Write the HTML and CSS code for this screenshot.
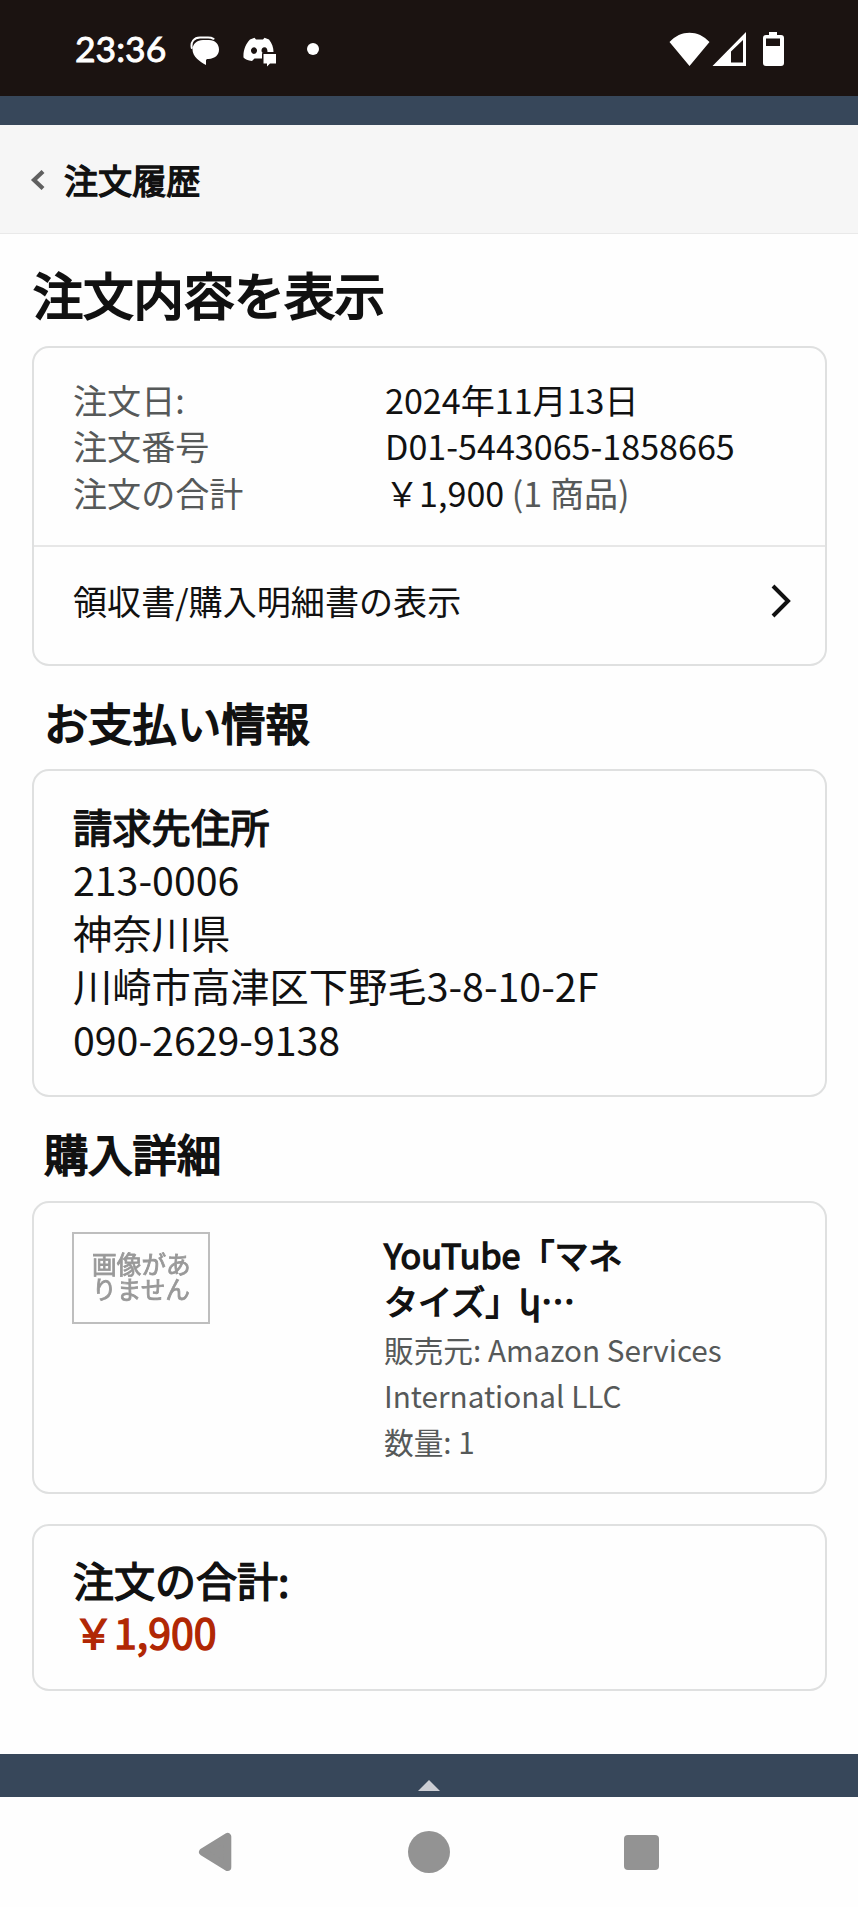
FILE: index.html
```html
<!DOCTYPE html>
<html lang="ja">
<head>
<meta charset="utf-8">
<title>注文内容を表示</title>
<link rel="stylesheet" href="styles.css">
</head>
<body>
<div class="status">
  <span class="clock">23:36</span>
  <svg class="ic-chat" width="30" height="30" viewBox="0 0 30 30"><path fill="none" stroke="#fff" stroke-width="2" stroke-linecap="round" d="M1.800 12C.5 6 4 1.500 10 1.500h8c2.500 0 4 .4 5.500 1.300"/><path fill="#fff" d="M13 4h6c6 0 10 4 10 9.500S25 22.500 18.500 23c-2 0-2.500.5-2.500 1.500v4.500C10 26 2.500 20.500 2.500 13.500 2.500 8 7 4 13 4z"/></svg>
  <svg class="ic-discord" width="34" height="30" viewBox="0 0 34 30"><path fill="#fff" fill-rule="evenodd" d="M7 2.500L11.500.8l1.500 1.700h7L21.500.8 26 2.500c3 4 4.500 8 4.500 12.500H21q-2 0-2 2v4.500h-7.500L9 24C5 23.500 2 22.500.5 20.500 0 13 3 6.500 7 2.500zM11 10.300a3 3.300 0 1 0 .01 0zM21.500 10.300c-2 0-3 1.500-3 3.300 0 .7.2 1.400.6 1.900l1.900-.5h3.500c0-3-1-4.700-3-4.700z"/><path fill="#fff" d="M20.500 17H33v9.500h-6l-3 3v-3h-3.500z"/></svg>
  <span class="dot"></span>
  <svg class="ic-system" width="116" height="36" viewBox="669 31 116 36"><path fill="#fff" d="M669.500 42c11-12.500 29-12.500 40 0l-20 24zM746 32v34h-33.500zM731 51.500V62.500h12V40z" fill-rule="evenodd"/><path fill="#fff" fill-rule="evenodd" d="M769 32h8v3h4q3 0 3 3v25q0 3-3 3h-15q-3 0-3-3V38q0-3 3-3h3zM766 38.500v7.500h14v-7.500z"/></svg>
</div>
<div class="strip"></div>
<header class="crumb">
  <svg width="15" height="20" viewBox="0 0 15 20"><path d="M13 1.500L4 10l9 8.500" fill="none" stroke="#606060" stroke-width="4.200"/></svg>
  <span class="crumb-text">注文履歴</span>
</header>
<main>
  <h1>注文内容を表示</h1>
  <section class="card">
    <dl class="facts">
      <dt>注文日:</dt><dd>2024年11月13日</dd>
      <dt>注文番号</dt><dd>D01-5443065-1858665</dd>
      <dt>注文の合計</dt><dd>￥1,900 <span class="muted">(1 商品)</span></dd>
    </dl>
    <div class="receipt">
      <span>領収書/購入明細書の表示</span>
      <svg width="20" height="34" viewBox="0 0 20 34"><path d="M2 2l15 15L2 32" fill="none" stroke="#111" stroke-width="4"/></svg>
    </div>
  </section>
  <h2 class="h-pay">お支払い情報</h2>
  <section class="card address">
    <h3>請求先住所</h3>
    <p>213-0006</p>
    <p>神奈川県</p>
    <p>川崎市高津区下野毛3-8-10-2F</p>
    <p>090-2629-9138</p>
  </section>
  <h2 class="h-buy">購入詳細</h2>
  <section class="card product">
    <div class="thumb"><span>画像があ<br>りません</span></div>
    <div class="info">
      <h3>YouTube「マネ<br>タイズ」կ<span class="dots">…</span></h3>
      <p>販売元: Amazon Services<br>International LLC</p>
      <p>数量: 1</p>
    </div>
  </section>
  <section class="card total">
    <h3>注文の合計:</h3>
    <p class="price">￥1,900</p>
  </section>
</main>
<footer class="top-link"><svg width="22" height="11" viewBox="0 0 22 11"><path d="M11 0l11 11H0z" fill="#ccced4"/></svg></footer>
<nav class="keys">
  <svg width="35" height="40" viewBox="0 0 35 40"><path d="M30 4v32L4 20z" fill="#939393" stroke="#939393" stroke-width="8" stroke-linejoin="round" transform="translate(1 1) scale(.95)"/></svg>
  <span class="home"></span>
  <span class="recent"></span>
</nav>
</body>
</html>
```

FILE: styles.css
```css
* { box-sizing: border-box; margin: 0; padding: 0; }
body {
  width: 858px;
  height: 1907px;
  overflow: hidden;
  background: #fefefe;
  color: #111;
  font: 400 34.100px/46.400px "Noto Sans CJK JP", "DejaVu Sans", sans-serif;
}
svg { display: block; flex: none; }
h1, h2, h3 { font-weight: 400; }
h1, h2, h3, .crumb-text, .price { -webkit-text-stroke: 1.4px currentColor; }

.status { display: flex; align-items: center; height: 96px; padding: 0 73px 0 75px; background: #1b1311; color: #fff; }
.clock { width: 115px; padding-top: 2px; font: 400 35.500px/40px Lato, sans-serif; -webkit-text-stroke: .9px #fff; }
.ic-chat { margin-top: 5px; }
.ic-discord { margin: 7px 0 0 23px; }
.dot { width: 12px; height: 12px; margin: 2px 0 0 30px; border-radius: 50%; background: #fff; }
.ic-system { margin: 2px 0 0 auto; }
.strip { height: 29px; background: #37475a; }

.crumb { display: flex; align-items: center; height: 109px; padding: 0 0 0 30px; background: #f6f6f6; border-bottom: 1px solid #e9e9e9; }
.crumb svg { margin-top: 2px; }
.crumb-text { margin-left: 19px; }

main { height: 1520px; padding: 30px 31px 0 32px; }
h1 { padding-left: 1px; font-size: 50.300px; line-height: 58px; -webkit-text-stroke-width: 2.200px; }
h2 { font-size: 44.300px; line-height: 54px; padding-left: 12px; -webkit-text-stroke-width: 1.800px; }
.card { border: 2px solid #dfe0e0; border-radius: 17px; background: #fefefe; }
.facts { display: grid; grid-template-columns: 312px 1fr; height: 199px; padding: 28px 0 0 39px; border-bottom: 2px solid #e7e7e7; align-content: start; }
h1 + .card { height: 320px; margin-top: 24px; }
dt, .muted { color: #565959; }
.receipt { display: flex; align-items: center; justify-content: space-between; height: 107px; padding: 0 34px 0 39px; }
.h-pay { margin-top: 29px; }
.address { height: 328px; margin-top: 20px; padding: 27.500px 39px 0; font-size: 39.300px; line-height: 53.300px; }
.address h3 { font-size: 39.300px; }
.h-buy { margin-top: 29px; }
.product { display: flex; height: 293px; margin-top: 21px; padding: 29px 0 0 39px; }
.thumb { display: flex; width: 138px; height: 92px; margin: 0 174px 0 -1px; padding: 17px 0 0 18px; border: 2px solid #bebebe; color: #999; font-size: 24.700px; line-height: 25px; -webkit-text-stroke: .8px #999; filter: blur(.6px); }
.info h3 { margin-top: -1px; font-size: 34.100px; }
.info p { color: #565959; font-size: 29.700px; line-height: 46.200px; }
.info h3 + p { margin-top: 3px; }
.dots { font-family: "Noto Sans CJK JP", sans-serif; }
.total { height: 167px; margin-top: 30px; padding: 27px 39px 0; font-size: 41px; line-height: 52px; }
.total h3 { font-size: 41px; }
.price { color: #b12704; }

.top-link { display: flex; justify-content: center; height: 43px; padding-top: 26px; background: #37475a; }
.keys { display: flex; align-items: center; height: 110px; padding-left: 198px; }
.home { width: 42px; height: 42px; margin-left: 175px; border-radius: 50%; background: #939393; }
.recent { width: 35px; height: 35px; margin-left: 174px; border-radius: 4px; background: #939393; }
```
